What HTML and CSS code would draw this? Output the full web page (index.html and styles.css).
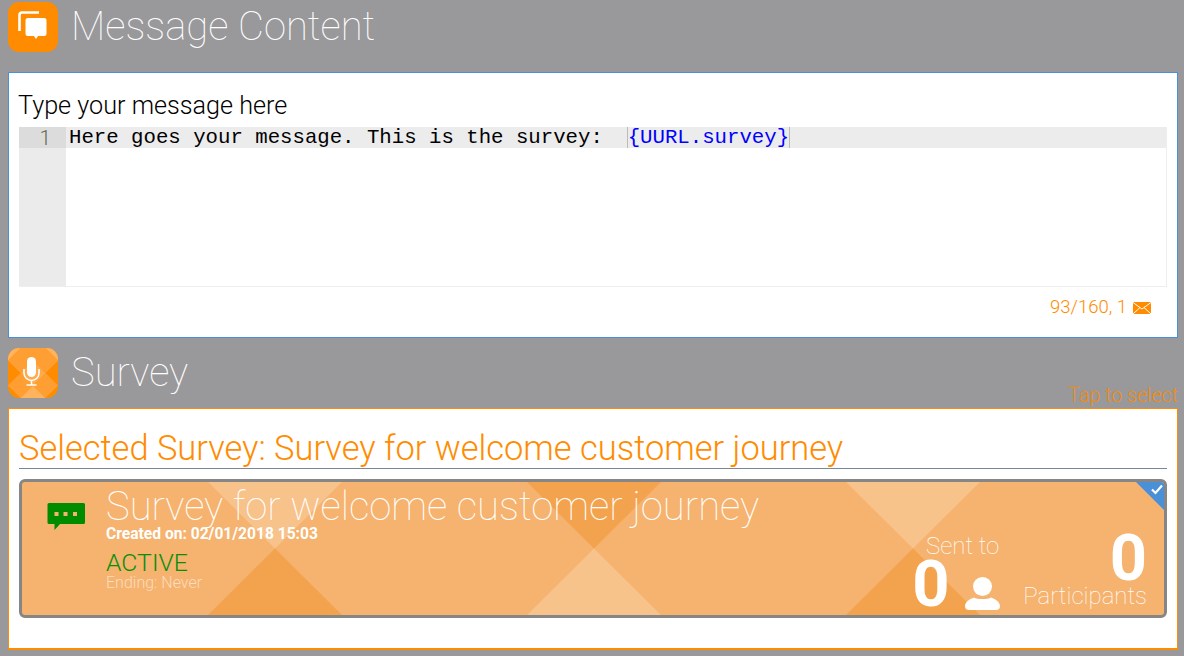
FILE: index.html
```html
<!DOCTYPE html>
<html lang="en">
<head>
<meta charset="utf-8">
<title>Message Content</title>
<link rel="stylesheet" href="styles.css">
</head>
<body>
<header class="section-head">
  <svg class="app-icon" viewBox="0 0 50 50" aria-hidden="true">
    <rect width="50" height="50" rx="11" fill="#ff8c00"/>
    <path d="M11.500 29V13a2.500 2.500 0 0 1 2.500-2.500H31" fill="none" stroke="#fff" stroke-width="2.600"/>
    <path d="M20 16h16a2.500 2.500 0 0 1 2.500 2.500v13a2.500 2.500 0 0 1-2.500 2.500h-6l-2 3-2-3h-6a2.500 2.500 0 0 1-2.500-2.500v-13a2.500 2.500 0 0 1 2.500-2.500z" fill="#fff"/>
  </svg>
  <h1 class="section-title">Message Content</h1>
</header>

<section class="panel panel-message">
  <div class="field-label">Type your message here</div>
  <div class="editor">
    <div class="gutter"><div class="gutter-active">1</div></div>
    <div class="code"><div class="code-line">Here goes your message. This is the survey:  <span class="token">{UURL.survey}</span></div></div>
  </div>
  <div class="counter">93/160, 1
    <svg class="envelope" viewBox="0 0 18 12" aria-hidden="true">
      <rect width="18" height="12" fill="#ff8c00"/>
      <path d="M0 0.500 9 7 18 0.500M0 12 7 5.500M18 12 11 5.500" fill="none" stroke="#fff" stroke-width="1"/>
    </svg>
  </div>
</section>

<header class="section-head section-head-survey">
  <svg class="app-icon" viewBox="0 0 50 50" aria-hidden="true">
    <defs><clipPath id="squircle"><rect width="50" height="50" rx="11"/></clipPath></defs>
    <g clip-path="url(#squircle)">
      <rect width="50" height="50" fill="#ff8c00"/>
      <path d="M0 -12.500 12.500 0 0 12.500-12.500 0zM50 -12.500 62.500 0 50 12.500 37.500 0zM25 37.500 37.500 50 25 62.500 12.500 50z" fill="#ffb35c"/>
      <path d="M25 -12.500 37.500 0 25 12.500 12.500 0zM12.500 0 25 12.500 12.500 25 0 12.500zM37.500 0 50 12.500 37.500 25 25 12.500zM12.500 25 25 37.500 12.500 50 0 37.500zM37.500 25 50 37.500 37.500 50 25 37.500z" fill="#ff9f33"/>
      <path d="M25 12.500 37.500 25 25 37.500 12.500 25z" fill="#ffab4d"/>
    </g>
    <rect x="19" y="9" width="9" height="20" rx="4.500" fill="#fff"/>
    <path d="M16 21v4a7.500 7.500 0 0 0 15 0v-4M23.500 33v4M18.500 37h10" fill="none" stroke="#fff" stroke-width="1.500"/>
  </svg>
  <h1 class="section-title">Survey</h1>
  <div class="tap-hint">Tap to select</div>
</header>

<section class="panel panel-survey">
  <h2 class="selected-title">Selected Survey: Survey for welcome customer journey</h2>
  <article class="survey-card">
    <div class="card-art">
      <svg class="card-pattern" viewBox="0 0 1142 133" preserveAspectRatio="none" aria-hidden="true">
        <path d="M186 0H320L253 66.500zM505 133H639L572 66.500zM824 0H958L891 66.500z" fill="#f8c28b"/>
        <path d="M186 133H320L253 66.500zM505 0H639L572 66.500zM824 133H958L891 66.500z" fill="#f3a34d"/>
      </svg>
      <svg class="card-corner" viewBox="0 0 28 28" aria-hidden="true">
        <path d="M0 0H28V28z" fill="#4a90d9"/>
        <path d="M16 7.500 19.500 11 26 3.500" fill="none" stroke="#fff" stroke-width="2.200"/>
      </svg>
    </div>
    <svg class="status-icon" viewBox="0 0 38 27" aria-hidden="true">
      <path d="M2 0h34.500A1.500 1.500 0 0 1 38 1.500v18a1.500 1.500 0 0 1-1.500 1.500H13L7.500 27V21h-5.500A1.500 1.500 0 0 1 .5 19.500v-18A1.500 1.500 0 0 1 2 0z" fill="#008c00"/>
      <path d="M7.500 9h4v4h-4zM16.500 9h4v4h-4zM26 9h4v4h-4z" fill="#f5b36f"/>
    </svg>
    <div class="card-main">
      <div class="card-title">Survey for welcome customer journey</div>
      <div class="card-created">Created on: 02/01/2018 15:03</div>
      <div class="card-status">ACTIVE</div>
      <div class="card-ending">Ending: Never</div>
    </div>
    <div class="stat-sent">
      <div class="stat-label stat-label-sent">Sent to</div>
      <div class="sent-row">
        <span class="stat-number">0</span>
        <svg class="person" viewBox="0 0 35 33" aria-hidden="true">
          <circle cx="17.500" cy="9.500" r="9.500" fill="#fff"/>
          <path d="M9 20.500C12 22.500 23 22.500 26 20.500 31 22 35 25.500 35 29 35 31.500 33.500 33 31 33H4C1.500 33 0 31.500 0 29 0 25.500 4 22 9 20.500z" fill="#fff"/>
        </svg>
      </div>
    </div>
    <div class="stat-participants">
      <span class="stat-number">0</span>
      <div class="stat-label">Participants</div>
    </div>
  </article>
</section>
</body>
</html>
```
FILE: styles.css
```css
* { box-sizing: border-box; }

html, body { height: 100%; }

body {
  margin: 0;
  padding: 2px 6px 0 8px;
  background: #99989a;
  font-family: Roboto, "Liberation Sans", sans-serif;
  overflow: hidden;
}

.section-head {
  position: relative;
  display: flex;
  align-items: center;
  gap: 13px;
  height: 50px;
}

.section-head-survey { margin-top: 10px; }

.app-icon {
  display: block;
  width: 50px;
  height: 50px;
  flex: none;
}

.section-title {
  margin: 0;
  font-size: 40px;
  line-height: 46px;
  font-weight: 100;
  color: #fff;
}

.tap-hint {
  position: absolute;
  right: 0;
  bottom: -10px;
  font-size: 19.600px;
  line-height: 24px;
  font-weight: 300;
  color: #f28b0e;
}

.panel {
  background: #fff;
  border: 1px solid #4a90d9;
  padding: 20px 10px 0;
}

.panel-message {
  height: 266px;
  margin-top: 20px;
}

.panel-survey {
  height: 242px;
  margin-top: 10px;
  border-color: #ff8c00;
  border-bottom-width: 2px;
}

.field-label {
  height: 24px;
  margin-left: -1px;
  font-size: 25.200px;
  line-height: 25px;
  font-weight: 300;
  color: #000;
}

.editor {
  display: flex;
  height: 160px;
  margin-top: 10px;
  border: 1px solid #eee;
  border-width: 0 1px 1px 0;
}

.gutter {
  width: 47px;
  flex: none;
  background: #ebebeb;
}

.gutter-active {
  height: 21px;
  padding-right: 15px;
  background: #dcdcdc;
  text-align: right;
  font-size: 20.800px;
  line-height: 22px;
  font-weight: 300;
  color: #665;
}

.code { flex: 1; min-width: 0; }

.code-line {
  height: 21px;
  padding-left: 3px;
  background: #ececec;
  font-family: "Liberation Mono", monospace;
  font-size: 20.700px;
  line-height: 21px;
  white-space: pre;
  color: #000;
}

.token {
  display: inline-block;
  height: 21px;
  color: #0000ff;
  box-shadow: -1px 0 0 #bbb, 1px 0 0 #bbb;
}

.counter {
  display: flex;
  justify-content: flex-end;
  align-items: center;
  gap: 6px;
  margin-top: 10px;
  padding-right: 16px;
  font-size: 18.500px;
  line-height: 21px;
  font-weight: 300;
  color: #ff8c00;
}

.envelope {
  display: block;
  width: 18px;
  height: 12px;
}

.selected-title {
  margin: 2px 0 0;
  height: 38px;
  border-bottom: 1px solid #778899;
  font-size: 34.450px;
  line-height: 35px;
  font-weight: 300;
  color: #ff8c00;
  white-space: nowrap;
}

.survey-card {
  position: relative;
  display: flex;
  height: 139px;
  margin-top: 10px;
  padding: 5px 0 0 25px;
  border: 3px solid #868686;
  border-radius: 6px;
  background: #f5b36f;
  color: #fff;
}

.card-art {
  position: absolute;
  inset: 0;
  overflow: hidden;
  border-radius: 3px;
}

.card-pattern {
  position: absolute;
  inset: 0;
  width: 100%;
  height: 100%;
}

.card-corner {
  position: absolute;
  top: 0;
  right: 0;
  width: 28px;
  height: 28px;
}

.status-icon {
  position: relative;
  display: block;
  flex: none;
  width: 38px;
  height: 27px;
  margin: 16px 21px 0 0;
}

.card-main {
  position: relative;
  flex: 1;
  min-width: 0;
}

.card-title {
  font-size: 40px;
  line-height: 40px;
  font-weight: 100;
  white-space: nowrap;
}

.card-created {
  margin-top: -1px;
  font-size: 15.600px;
  line-height: 16px;
  font-weight: 700;
}

.card-status {
  margin-top: 9px;
  font-size: 24.800px;
  line-height: 24px;
  font-weight: 300;
  color: #0a8f0a;
}

.card-ending {
  font-size: 16px;
  line-height: 16px;
  font-weight: 300;
  color: #fbdcbc;
}

.stat-sent {
  position: relative;
  flex: none;
  align-self: flex-end;
  width: 88px;
  margin-right: 23px;
}

.stat-label {
  font-size: 24px;
  line-height: 24px;
  font-weight: 100;
  color: #fff;
  white-space: nowrap;
}

.stat-label-sent {
  padding-right: 1px;
  text-align: right;
}

.sent-row {
  display: flex;
  justify-content: space-between;
  align-items: flex-end;
  padding-bottom: 5px;
}

.stat-number {
  display: block;
  font-size: 65px;
  line-height: 52px;
  font-weight: 700;
  color: #fff;
}

.person {
  display: block;
  width: 35px;
  height: 33px;
}

.stat-participants {
  position: relative;
  flex: none;
  align-self: flex-end;
  margin-right: 17px;
  padding-bottom: 7px;
  text-align: right;
}
```
